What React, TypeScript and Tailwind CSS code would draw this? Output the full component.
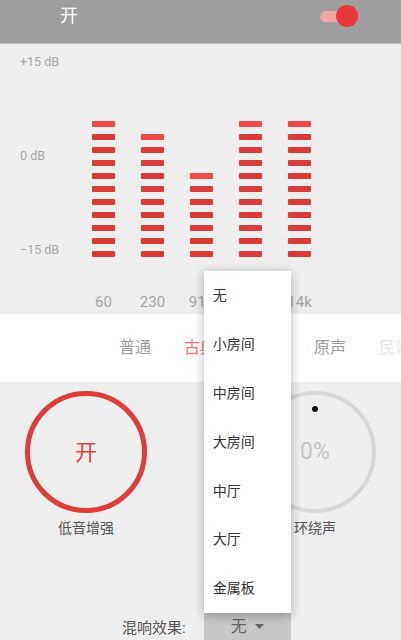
import React from "react";

const bars = [
  { n: 11, label: "60" },
  { n: 10, label: "230" },
  { n: 7, label: "910" },
  { n: 11, label: "3.6k" },
  { n: 11, label: "14k" },
];

const tabs = [
  { t: "普通", c: "text-[#9e9e9e]" },
  { t: "古典", c: "text-[#ea7b7b]" },
  { t: "流行", c: "text-[#9e9e9e]" },
  { t: "原声", c: "text-[#9e9e9e]" },
  { t: "民谣", c: "text-[#e6e6e6]" },
];

const menu = ["无", "小房间", "中房间", "大房间", "中厅", "大厅", "金属板"];

export default function App() {
  return (
    <div
      className="w-[401px] h-[640px] overflow-hidden bg-[#eeeeee] flex flex-col"
      style={{ fontFamily: 'Roboto, "Noto Sans CJK SC", sans-serif' }}
    >
      {/* header */}
      <div className="h-[44px] shrink-0 bg-[#9e9e9e] border-b border-[#c4c4c4]">
        <div className="h-[32px] flex items-center justify-between pl-[60px] pr-[43px]">
          <span className="text-white text-[18px] leading-none">开</span>
          <div className="relative w-[38px] h-[22px] flex items-center">
            <div className="w-[30px] h-[11px] rounded-full bg-[#f2a3a3]" />
            <div className="absolute right-0 top-0 w-[22px] h-[22px] rounded-full bg-[#e8393a]" />
          </div>
        </div>
      </div>

      {/* chart */}
      <div className="h-[270px] shrink-0 flex pt-[11px]">
        <div className="w-[92px] shrink-0 pl-[20px] flex flex-col">
          <div className="h-[202px] flex flex-col justify-between text-[12.5px] leading-[14px] text-[#a8a8a8]">
            <span>+15 dB</span>
            <span>0 dB</span>
            <span>−15 dB</span>
          </div>
        </div>
        <div className="flex gap-[26px]">
          {bars.map((b, i) => (
            <div key={i} className="w-[23px] flex flex-col items-center">
              <div className="h-[202px] w-full flex flex-col justify-end gap-[7px]">
                {Array.from({ length: b.n }).map((_, j) => (
                  <div
                    key={j}
                    className={
                      j === 0
                        ? "h-[6px] w-full bg-[#ef4848] rounded-[1px]"
                        : "h-[6px] w-full bg-[#d93a3a] rounded-[1px]"
                    }
                  />
                ))}
              </div>
              <div className="mt-[36px] whitespace-nowrap text-[15px] leading-[18px] text-[#a6a6a6]">
                {b.label}
              </div>
            </div>
          ))}
        </div>
      </div>

      {/* tabs */}
      <div className="h-[68px] shrink-0 bg-white flex items-center pl-[119px] gap-[33px] whitespace-nowrap overflow-hidden">
        {tabs.map((t) => (
          <span key={t.t} className={`text-[16px] leading-none ${t.c}`}>
            {t.t}
          </span>
        ))}
      </div>

      {/* bottom */}
      <div className="flex-1 flex flex-col">
        <div className="flex justify-between px-[25px] pt-[9px]">
          <div className="flex flex-col items-center">
            <div className="w-[122px] h-[122px] rounded-full border-[5px] border-[#e03c3c] flex items-center justify-center">
              <span className="text-[22px] text-[#d94444]">开</span>
            </div>
            <span className="mt-[5px] text-[14px] leading-[20px] text-[#555555]">低音增强</span>
          </div>
          <div className="flex flex-col items-center">
            <div className="relative w-[122px] h-[122px] rounded-full border-[4px] border-[#d8d8d8] flex items-center justify-center">
              <span className="text-[23px] text-[#c6c6c6]">0%</span>
              <div className="absolute left-[54px] top-[11px] w-[6px] h-[6px] rounded-full bg-[#111111]" />
            </div>
            <span className="mt-[5px] text-[14px] leading-[20px] text-[#555555]">环绕声</span>
          </div>
        </div>

        <div className="mt-[75px] flex items-center pl-[122px] gap-[18px]">
          <span className="text-[15px] text-[#555555]">混响效果:</span>
          <div className="relative">
            <div className="w-[87px] h-[30px] bg-[#c6c6c6] flex items-center justify-center gap-[8px] pb-[2px]">
              <span className="text-[16px] text-[#666666]">无</span>
              <svg width="9" height="6" viewBox="0 0 9 6">
                <path d="M0 0 L9 0 L4.5 5 Z" fill="#666666" />
              </svg>
            </div>
            <div className="absolute left-0 bottom-full w-[87px] bg-white shadow-[0_2px_10px_rgba(0,0,0,0.3)] flex flex-col">
              {menu.map((m) => (
                <div key={m} className="h-[48.8px] flex items-center pl-[9px] text-[14px] text-[#333333]">
                  {m}
                </div>
              ))}
            </div>
          </div>
        </div>
      </div>
    </div>
  );
}
